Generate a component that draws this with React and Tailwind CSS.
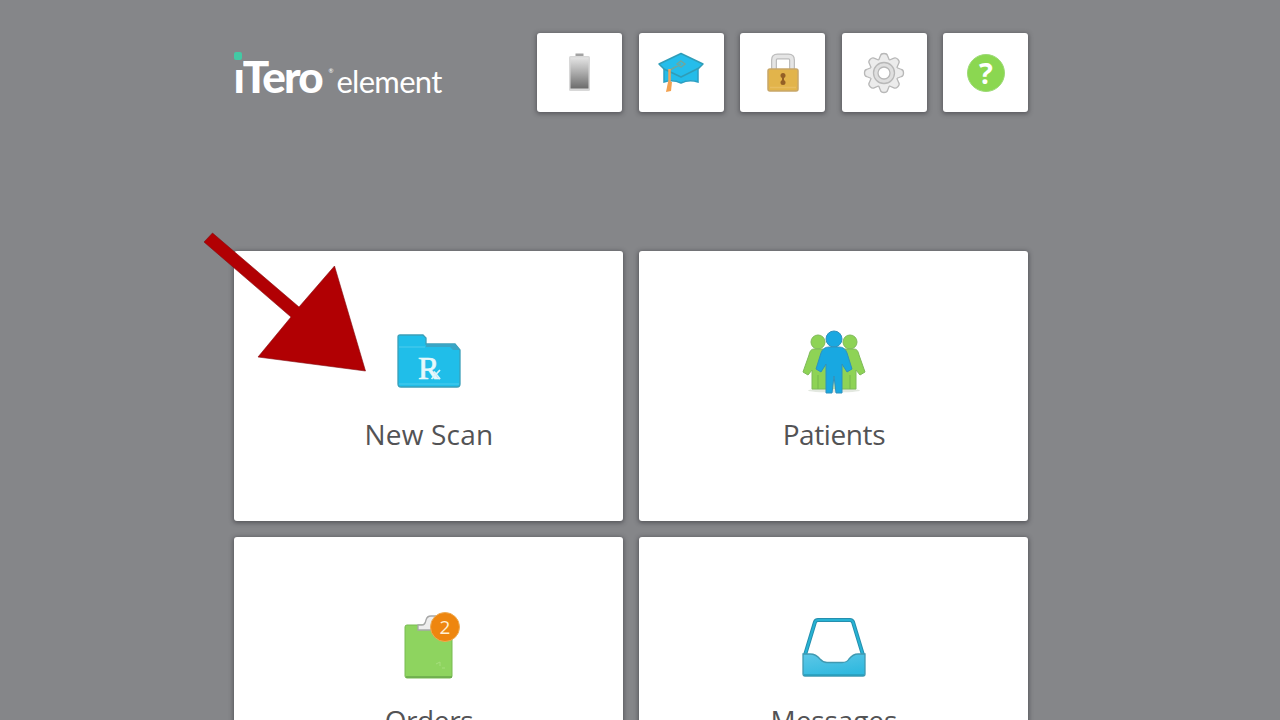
import clsx from "clsx";

function BatteryIcon() {
  return (
    <svg width="24" height="42" viewBox="0 0 24 42">
      <defs>
        <linearGradient id="battery" x1="0" y1="0" x2="0" y2="1">
          <stop offset="0" stopColor="#e4e4e4" />
          <stop offset="0.45" stopColor="#b0b0b0" />
          <stop offset="1" stopColor="#6c6c6c" />
        </linearGradient>
      </defs>
      <rect x="7.5" y="1.5" width="8" height="4" fill="#a2a2a2" />
      <rect x="1" y="4" width="21" height="35" rx="1.5" fill="#d8d8d8" />
      <rect x="2.5" y="5.5" width="18" height="31" fill="url(#battery)" />
    </svg>
  );
}

function LearningIcon() {
  return (
    <svg width="48" height="44" viewBox="0 0 48 44">
      <path
        d="M7 13v18c6-2 11-2 17 1 6-3 11-3 17-1V13z"
        fill="#24bce9"
        stroke="#2b9fc3"
        strokeWidth="1.5"
      />
      <path
        d="M24 2.5 46 13 42 17 24 26 7 18 2 13z"
        fill="#25bdeb"
        stroke="#309db8"
        strokeWidth="1.5"
        strokeLinejoin="round"
      />
      <path
        d="M24 13 13 19M24 10l4 3-4 3-4-3z"
        fill="none"
        stroke="#6fa79e"
        strokeWidth="1.5"
      />
      <path d="M12.5 18v14" stroke="#f0a55b" strokeWidth="2.5" />
      <path d="m11 31-2 10 5-1 1-9z" fill="#f3a14f" />
    </svg>
  );
}

function LockIcon() {
  return (
    <svg width="34" height="42" viewBox="0 0 34 42">
      <path
        d="M8 19V8q0-3.500 3.500-3.500h11q3.500 0 3.500 3.500v11"
        fill="none"
        stroke="#bcbcbc"
        strokeWidth="6"
      />
      <path
        d="M8 19V8q0-3.500 3.500-3.500h11q3.500 0 3.500 3.500v11"
        fill="none"
        stroke="#e5e5e5"
        strokeWidth="3.5"
      />
      <rect
        x="2"
        y="17"
        width="30"
        height="22"
        rx="2"
        fill="#e2b44b"
        stroke="#c7a669"
        strokeWidth="1.5"
      />
      <path d="M4 35.500h26" stroke="#e8be60" strokeWidth="1.5" />
      <circle cx="17" cy="23.500" r="2.500" fill="#946026" />
      <path d="M17 23v7" stroke="#946026" strokeWidth="2" />
      <circle cx="17" cy="30.500" r="2.500" fill="#946026" />
    </svg>
  );
}

function GearIcon() {
  const teeth = [0, 45, 90, 135, 180, 225, 270, 315];

  return (
    <svg width="44" height="44" viewBox="-22 -22 44 44">
      <g fill="#ececec" stroke="#b8b8b8" strokeWidth="1.3">
        {teeth.map((angle) => (
          <path
            key={angle}
            d="M-5.500-12.500-3.500-17.500q.5-2 3.500-2t3.500 2L5.500-12.500"
            transform={`rotate(${angle})`}
          />
        ))}
        <circle r="13.5" stroke="none" />
        <circle r="10.5" fill="#dfdfdf" />
        <circle r="6" fill="#ffffff" />
      </g>
    </svg>
  );
}

function HelpIcon() {
  return (
    <span className="flex size-[38px] items-center justify-center rounded-full border border-[#9dda77] bg-[#8bd751] [font-family:'Open_Sans',sans-serif] text-[29px] leading-none font-bold text-white">
      ?
    </span>
  );
}

function FolderIcon() {
  return (
    <div className="relative h-[56px] w-[66px]">
      <svg width="66" height="56" viewBox="0 0 66 56">
        <path
          d="M2 4q0-2 2-2h23l3 3v6h29l5 6v34q0 3-3 3H5q-3 0-3-3z"
          fill="#20bee9"
          stroke="#3b9fb8"
          strokeWidth="1.3"
        />
        <path d="M3 14h26M3 51h60" stroke="#3fc8ec" strokeWidth="1.5" />
        <path d="M30 11h29l5 6h-7l-3-3H30z" fill="#39a5c5" />
      </svg>
      <span className="absolute top-[17px] left-[22px] [font-family:'Liberation_Serif',serif] text-[32px] leading-[36px] text-[#e7f8fb] [-webkit-text-stroke:0.7px_#e7f8fb]">
        R
      </span>
      <svg
        className="absolute top-[34px] left-[34px]"
        width="12"
        height="14"
        viewBox="0 0 12 14"
      >
        <path
          d="M1.500 12 10 3M4 4.500 10 12"
          stroke="#d9f4fa"
          strokeWidth="1.8"
          fill="none"
        />
      </svg>
    </div>
  );
}

function PatientsIcon() {
  return (
    <svg width="64" height="66" viewBox="0 0 64 66">
      <ellipse cx="32" cy="61.5" rx="26" ry="2" fill="#e3e8e0" />
      <g fill="#8ed355" stroke="#7fba5a" strokeWidth="1">
        <circle cx="16" cy="13" r="7" />
        <path d="M12 20h13l6 8v32H10V41l-4 5-5-3 6-17q1-6 5-6z" />
        <circle cx="48" cy="13" r="7" />
        <path d="M52 20H39l-6 8v32h21V41l4 5 5-3-6-17q-1-6-5-6z" />
      </g>
      <path d="M16 46v14M48 46v14" stroke="#75b74d" strokeWidth="1" />
      <g fill="#18a8e1" stroke="#2f91bd" strokeWidth="1">
        <circle cx="32" cy="10" r="8" />
        <path d="M27 18h10q6 0 8 6l5 16-5 3-5-8v29h-6l-2-17-2 17h-6V35l-5 8-5-3 5-16q2-6 8-6z" />
      </g>
    </svg>
  );
}

function OrdersIcon() {
  return (
    <div className="relative h-[68px] w-[50px]">
      <svg width="50" height="68" viewBox="0 0 50 68">
        <rect
          x="1"
          y="12"
          width="47"
          height="53"
          rx="2"
          fill="#8ed45f"
          stroke="#79bb53"
        />
        <path d="M2 64h46" stroke="#68a94b" strokeWidth="1.5" />
        <path
          d="M14 12h4q3 0 4-5 1-4 5-4h5v14H14z"
          fill="#eeeeee"
          stroke="#a7a8a8"
          strokeWidth="1.3"
        />
        <path d="m32 51 4-2v4M38 55h3" stroke="#a5de7d" fill="none" />
      </svg>
      <span className="absolute -top-px left-[26px] flex size-[30px] items-center justify-center rounded-full border border-[#efab52] bg-[#ee860f] [font-family:'Open_Sans',sans-serif] text-[19px] leading-none text-[#fff0d5]">
        2
      </span>
    </div>
  );
}

function MessagesIcon() {
  return (
    <svg width="66" height="62" viewBox="0 0 66 62">
      <defs>
        <linearGradient id="tray" x1="0" y1="0" x2="0.5" y2="1">
          <stop offset="0" stopColor="#5ec7e7" />
          <stop offset="1" stopColor="#30b9df" />
        </linearGradient>
      </defs>
      <path
        d="M4 38 14 5q.8-2 3-2h32q2 0 3 2l10 33"
        fill="none"
        stroke="#258fae"
        strokeWidth="4"
      />
      <path
        d="M4 38 14 5q.8-2 3-2h32q2 0 3 2l10 33"
        fill="none"
        stroke="#27b3d4"
        strokeWidth="2"
      />
      <path
        d="M2 37h7q6 0 10 5 3 3.500 7 3.500h15q5 0 7-3.500 4-5 9-5h7v20q0 2-2 2H4q-2 0-2-2z"
        fill="url(#tray)"
        stroke="#4099b1"
        strokeWidth="1.3"
      />
      <path d="M3 58h60" stroke="#299cba" strokeWidth="1.5" />
    </svg>
  );
}

const tools = [
  { id: "battery", Icon: BatteryIcon },
  { id: "learning", Icon: LearningIcon },
  { id: "lock", Icon: LockIcon },
  { id: "settings", Icon: GearIcon },
  { id: "help", Icon: HelpIcon },
];

const tiles = [
  {
    label: "New Scan",
    Icon: FolderIcon,
    iconClass: "pt-[82px]",
    labelClass: "tracking-[0.2px]",
  },
  {
    label: "Patients",
    Icon: PatientsIcon,
    iconClass: "pt-[78px]",
    labelClass: "tracking-[-0.4px]",
  },
  {
    label: "Orders",
    Icon: OrdersIcon,
    iconClass: "pt-[76px]",
    labelClass: "tracking-[-0.4px]",
  },
  {
    label: "Messages",
    Icon: MessagesIcon,
    iconClass: "pt-[80px]",
    labelClass: "tracking-[-0.1px]",
  },
];

function Logo() {
  return (
    <div className="relative flex h-[79px] w-[210px] items-baseline pt-[18px] [font-family:Lato,sans-serif] leading-[50px] text-white">
      <span className="-ml-px w-[93px] text-[44px] font-black tracking-[-1.8px]">
        iTero
      </span>
      <span className="w-[10px] self-start pl-[2px] text-[6px] leading-[40px]">
        ®
      </span>
      <span className="text-[31px] tracking-[-0.7px]">element</span>
      <span className="absolute top-[17px] left-0 h-[19px] w-[9px] bg-[#858689]" />
      <span className="absolute top-[19px] left-0 size-[8px] rounded-[2px] bg-[#43c9a4]" />
    </div>
  );
}

function ToolButton({ Icon }) {
  return (
    <button
      type="button"
      className="flex h-[79px] w-[85px] items-center justify-center rounded-[3px] bg-white shadow-[0_1px_4px_1px_rgba(50,50,55,0.5)]"
    >
      <Icon />
    </button>
  );
}

function Tile({ label, Icon, iconClass, labelClass }) {
  return (
    <button
      type="button"
      className="flex h-[270px] flex-col items-center rounded-[3px] bg-white shadow-[0_1px_4px_1px_rgba(50,50,55,0.55)]"
    >
      <div className={clsx("flex h-[161px] items-start", iconClass)}>
        <Icon />
      </div>
      <span
        className={clsx(
          "[font-family:'Open_Sans',sans-serif] text-[28px] leading-[44px] text-[#535355]",
          labelClass,
        )}
      >
        {label}
      </span>
    </button>
  );
}

function App() {
  return (
    <div className="relative h-[720px] w-[1280px] overflow-hidden bg-[#858689]">
      <main className="ml-[234.4px] w-[794px] pt-[33px]">
        <header className="flex justify-between">
          <Logo />
          <nav className="flex gap-[16.6px]">
            {tools.map((tool) => (
              <ToolButton key={tool.id} Icon={tool.Icon} />
            ))}
          </nav>
        </header>

        <section className="mt-[139px] grid grid-cols-2 gap-4">
          {tiles.map((tile) => (
            <Tile key={tile.label} {...tile} />
          ))}
        </section>
      </main>

      <svg
        className="absolute top-[225px] left-[195px]"
        width="180"
        height="155"
        viewBox="195 225 180 155"
      >
        <path
          d="M212.500 233 299 307 334.500 266 365.500 371 258 357 291 317 204 242z"
          fill="#b10003"
          stroke="#850c10"
          strokeWidth="0.6"
        />
      </svg>
    </div>
  );
}

export default App;
